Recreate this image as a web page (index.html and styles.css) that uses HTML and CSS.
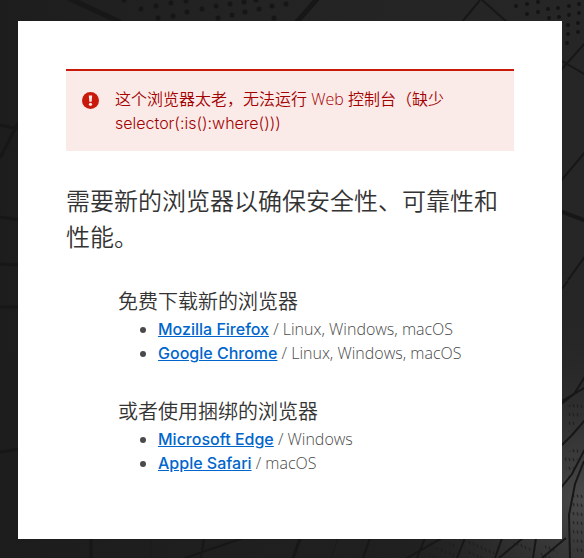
FILE: index.html
```html
<!DOCTYPE html>
<html lang="zh-CN">
<head>
<meta charset="utf-8">
<meta name="viewport" content="width=device-width, initial-scale=1">
<title>Web 控制台</title>
<link rel="stylesheet" href="styles.css">
</head>
<body>
<svg class="backdrop" viewBox="0 0 584 558" preserveAspectRatio="xMidYMid slice" aria-hidden="true">
  <defs>
    <linearGradient id="base" x1="0" y1="0" x2="1" y2="0">
      <stop offset="0" stop-color="#1d1d1d"/>
      <stop offset=".4" stop-color="#232323"/>
      <stop offset="1" stop-color="#262626"/>
    </linearGradient>
    <linearGradient id="dim" x1="0" y1="0" x2="0" y2="1">
      <stop offset=".6" stop-color="#1c1c1c" stop-opacity="0"/>
      <stop offset="1" stop-color="#1c1c1c" stop-opacity=".6"/>
    </linearGradient>
    <radialGradient id="glow" gradientUnits="userSpaceOnUse" cx="584" cy="500" r="190">
      <stop offset="0" stop-color="#494949"/>
      <stop offset=".4" stop-color="#363636" stop-opacity=".8"/>
      <stop offset="1" stop-color="#262626" stop-opacity="0"/>
    </radialGradient>
    <pattern id="windows" width="4" height="10" patternUnits="userSpaceOnUse" patternTransform="skewY(24)">
      <path d="M1 2l1 3" stroke="#191919" stroke-width="1"/>
    </pattern>
    <pattern id="windowsSide" width="4" height="9" patternUnits="userSpaceOnUse" patternTransform="skewY(5)">
      <path d="M1 3l1 3" stroke="#181818" stroke-width="1"/>
    </pattern>
  </defs>
  <path fill="url(#base)" d="M0 0h584v558H0z"/>
  <path fill="url(#dim)" d="M0 0h584v558H0z"/>
  <path fill="url(#glow)" d="M380 300h204v258H380z"/>
  <path fill="none" stroke="#161616" stroke-width="5" stroke-linecap="round" d="M124 0h0M141 9h0M156 6h0M171 3h0M186 1h0M158 18h0M173 16h0M187 12h0M202 9h0M216 6h0M230 4h0M244 2h0M218 18h0M232 15h0M245 12h0M259 9h0M272 6h0M286 4h0M274 18h0M256 0h0"/>
  <path fill="none" stroke="#141414" stroke-width="4" stroke-linecap="round" d="M516 6h0M527 4h0M538 2h0M527 14h0M538 12h0M548 9h0M558 8h0M569 6h0M579 4h0M549 18h0M559 17h0M569 15h0M579 13h0M568 25h0M578 23h0M568 34h0M578 32h0M567 43h0"/>
  <path fill="url(#windows)" d="M424 558l14-16h20l-4 16zM466 558l3-18 29 6-6 12zM510 546l8-8 15 5-4 15zM540 550l12-10 8 18h-18z"/>
  <path fill="url(#windowsSide)" d="M566 407l14-8 4 12-16 22zM564 455l14-10 4 3-14 34zM571 490h13v64h-10z"/>
  <g fill="none" stroke="#171717">
    <path stroke-width="5" d="M68-2l52 24"/>
    <path stroke-width="5" d="M318-2l-22 25"/>
    <path stroke-width="2" d="M480-2l28 25M480 0l-18 22M562 61l24 14M560 71l26-29"/>
    <path stroke-width="4" d="M560 211l26 10"/>
    <path stroke-width="2" d="M560 182l26-31M568 280l18-25M560 291l8-10"/>
    <path stroke-width="3" d="M0 125l18 4M18 123L0 158M0 217l20 3M0 264l20 1M0 307h20M0 452l20-3"/>
    <path stroke-width="3" d="M91 536v22M301 536l-8 22"/>
    <path stroke-width="2" d="M243 538l-58 20M204 538l-3 20M370 538l-7 20M442 538l-35 20M425 538l-8 20M465 538l-8 20M523 538l-24 20M502 538l-7 20M536 538l-3 20M566 538l-24 20"/>
    <path stroke-width="2" d="M560 405l14-11 12-19M560 402l26-15M560 447l12-12 14-16M560 489l12-15 14-27M584 461l-9 23-6 31 1 43"/>
    <path stroke-width="1" stroke="#1b1b1b" d="M338 538l-7 20M151 538v20"/>
  </g>
</svg>
<main class="card">
  <div class="alert" role="alert">
    <svg class="alert-icon" viewBox="0 0 18 18" aria-hidden="true">
      <circle cx="9" cy="9" r="9" fill="#c9190b"/>
      <path d="M7.2 3.6h3.6l-.6 6.6H7.8z" fill="#faeae8"/>
      <circle cx="9" cy="13" r="1.7" fill="#faeae8"/>
    </svg>
    <p class="alert-text">这个浏览器太老，无法运行 Web 控制台（缺少 <span class="code">selector(:is():where()))</span></p>
  </div>
  <h1 class="title">需要新的浏览器以确保安全性、可靠性和性能。</h1>
  <div class="choices">
    <section>
      <h2 class="subtitle">免费下载新的浏览器</h2>
      <ul class="browsers">
        <li><a href="#firefox">Mozilla Firefox</a> / Linux, Windows, macOS</li>
        <li><a href="#chrome">Google Chrome</a> / Linux, Windows, macOS</li>
      </ul>
    </section>
    <section>
      <h2 class="subtitle">或者使用捆绑的浏览器</h2>
      <ul class="browsers">
        <li><a href="#edge">Microsoft Edge</a> / Windows</li>
        <li><a href="#safari">Apple Safari</a> / macOS</li>
      </ul>
    </section>
  </div>
</main>
</body>
</html>
```
FILE: styles.css
```css
* {
  box-sizing: border-box;
}

body {
  margin: 0;
  padding: 21px 22px 19px 18px;
  background: #212121;
  color: #4a4a4a;
  font: 300 16px/24px "Open Sans", "Noto Sans CJK SC", sans-serif;
}

h1, h2, p, ul {
  margin: 0;
}

.backdrop {
  position: fixed;
  inset: 0;
  z-index: -1;
  width: 100%;
  height: 100%;
}

.card {
  display: flex;
  flex-direction: column;
  gap: 32px;
  padding: 48px 48px 64px;
  background: #fff;
}

.alert {
  display: flex;
  gap: 16px;
  padding: 16px;
  border-top: 2px solid #c9190b;
  background: #faeae8;
  color: #a30000;
}

.alert-icon {
  flex: none;
  width: 17px;
  height: 17px;
  margin-top: 5px;
}

.alert-text {
  font-weight: 350;
}

.code {
  font-family: Inter, sans-serif;
  font-weight: 300;
  line-height: 16px;
}

.title {
  color: #333;
  font-size: 24px;
  font-weight: 350;
  line-height: 36px;
}

.choices {
  display: grid;
  gap: 32px;
  padding-left: 52px;
}

.subtitle {
  color: #333;
  font-size: 20px;
  font-weight: 350;
  line-height: 30px;
}

.browsers {
  padding-left: 40px;
}

.browsers a {
  color: #06c;
  font-family: Inter, sans-serif;
  font-weight: 500;
  line-height: 16px;
  text-decoration: underline;
}
```
